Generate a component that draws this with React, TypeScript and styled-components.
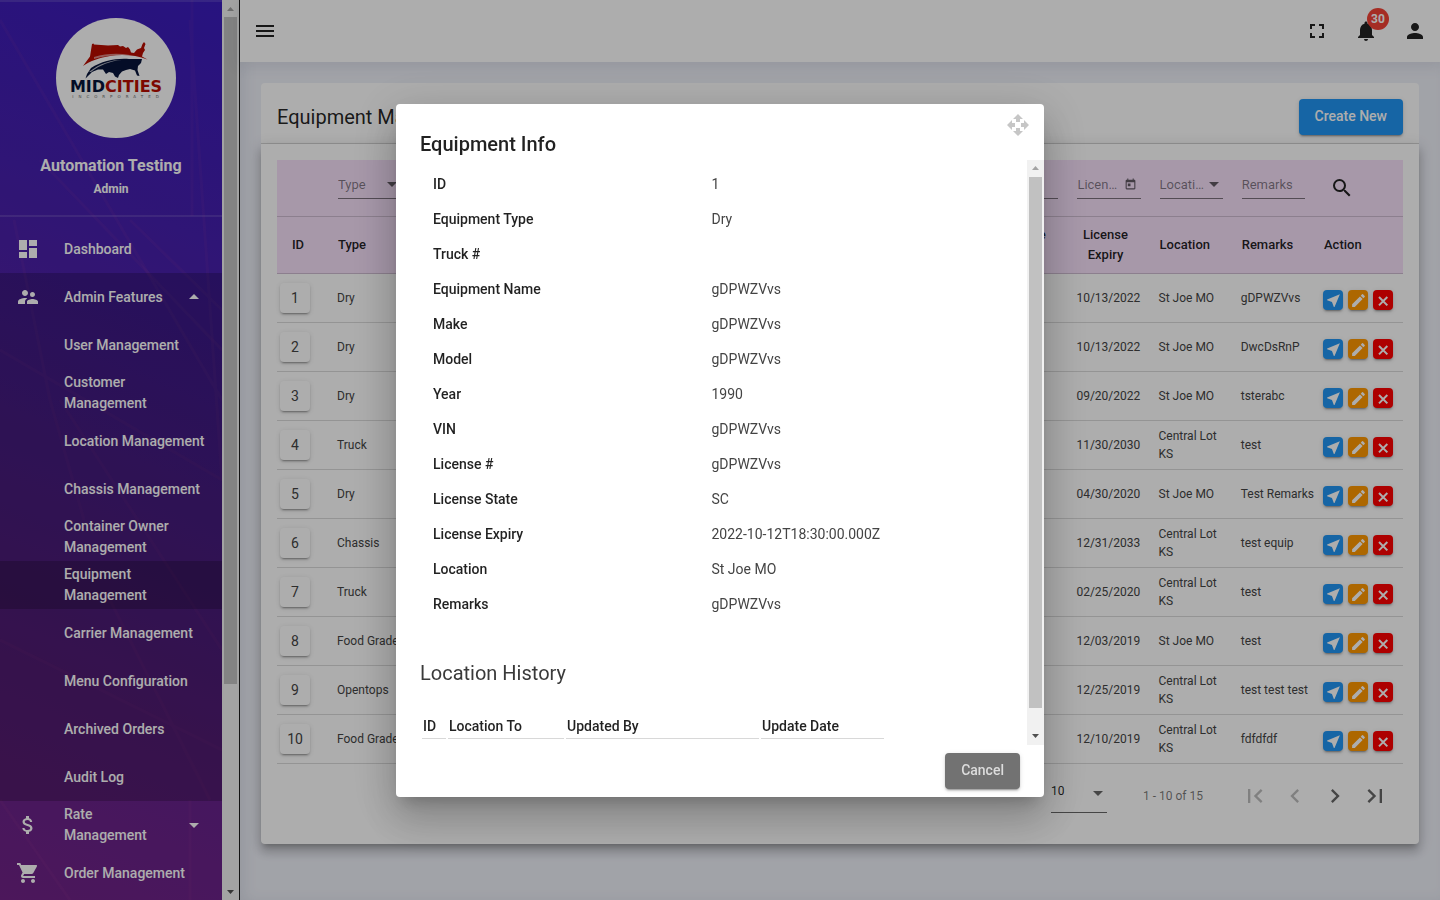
import React from 'react';
import styled, { createGlobalStyle, css } from 'styled-components';
import {
  MdArrowDropDown,
  MdArrowDropUp,
  MdAttachMoney,
  MdChevronLeft,
  MdChevronRight,
  MdDashboard,
  MdEdit,
  MdFirstPage,
  MdFullscreen,
  MdLastPage,
  MdMenu,
  MdNearMe,
  MdNotifications,
  MdOpenWith,
  MdPerson,
  MdSearch,
  MdShoppingCart,
  MdSupervisorAccount,
  MdToday,
} from 'react-icons/md';

const GlobalStyle = createGlobalStyle`
  *, *::before, *::after { box-sizing: border-box; }
  html, body, #root { height: 100%; }
  body {
    margin: 0;
    overflow: hidden;
    background: #eef0f8;
    color: rgba(0, 0, 0, 0.87);
    font-family: Roboto, "Liberation Sans", sans-serif;
    font-size: 14px;
  }
  button, input, select { font-family: inherit; color: inherit; }
  button { cursor: pointer; }
`;

const bareButton = css`
  display: flex;
  align-items: center;
  justify-content: center;
  padding: 0;
  border: 0;
  background: none;
`;

const raised = css`
  box-shadow: 0 3px 1px -2px rgba(0, 0, 0, 0.2), 0 2px 2px 0 rgba(0, 0, 0, 0.14),
    0 1px 5px 0 rgba(0, 0, 0, 0.12);
`;

const Shell = styled.div`
  display: flex;
  height: 100vh;
`;

/* ---------- sidebar ---------- */

const Sidebar = styled.aside`
  display: flex;
  flex: 0 0 240px;
  overflow: hidden;
  border-right: 1px solid #1c1c1c;
`;

const SidebarBody = styled.div`
  position: relative;
  flex: 1;
  overflow: hidden;
  color: #fff;
  background: linear-gradient(22deg, #702286 0%, #64228e 25%, #55229e 50%, #461fae 75%, #3a1cbc 100%);
`;

const Streaks = styled.svg`
  position: absolute;
  inset: 0;
  width: 100%;
  height: 100%;
`;

const SidebarContent = styled.div`
  position: relative;
`;

const Profile = styled.div`
  display: flex;
  flex-direction: column;
  align-items: center;
  height: 217px;
  padding-top: 16px;
  border-top: 2px solid rgba(255, 255, 255, 0.12);
  border-bottom: 2px solid rgba(255, 255, 255, 0.12);
`;

const Avatar = styled.div`
  flex: none;
  width: 120px;
  height: 120px;
  margin-left: 10px;
  border-radius: 50%;
  overflow: hidden;
  background: #fff;
`;

const UserName = styled.div`
  margin-top: 16px;
  font-size: 16px;
  font-weight: 700;
  line-height: 24px;
`;

const UserRole = styled.div`
  font-size: 12px;
  font-weight: 700;
  line-height: 22px;
`;

const Menu = styled.ul<{ $top?: boolean }>`
  margin: 0;
  padding: ${(p) => (p.$top ? '8px' : '0')} 0 0;
  list-style: none;
`;

const MenuGroup = styled.li<{ $open?: boolean }>`
  background: ${(p) => (p.$open ? 'rgba(0, 0, 0, 0.2)' : 'none')};
`;

const MenuLink = styled.a<{ $active?: boolean }>`
  display: grid;
  grid-template-columns: 48px 1fr auto;
  align-items: center;
  height: 48px;
  padding-left: 16px;
  color: #fff;
  background: ${(p) => (p.$active ? 'rgba(0, 0, 0, 0.2)' : 'none')};
  font-size: 14px;
  font-weight: 500;
  line-height: 21px;
  text-decoration: none;
`;

const SubLink = styled(MenuLink)`
  display: flex;
  padding: 0 16px 0 64px;
`;

const Caret = styled.span`
  display: flex;
  padding: 0 16px;
`;

/* ---------- scroll bar ---------- */

const Track = styled.div`
  display: flex;
  flex: 0 0 17px;
  flex-direction: column;
  align-items: center;
  background: #f1f1f1;
`;

const ThumbLane = styled.div`
  display: flex;
  flex: 1;
  flex-direction: column;
`;

const Thumb = styled.div<{ $share: number }>`
  flex: 0 0 ${(p) => p.$share * 100}%;
  width: 13px;
  background: #c1c1c1;
`;

const ArrowCell = styled.div`
  display: flex;
  align-items: center;
  justify-content: center;
  flex: 0 0 17px;
`;

function ScrollBar({ share }: { share: number }) {
  return (
    <Track aria-hidden="true">
      <ArrowCell>
        <svg width="7" height="4" viewBox="0 0 7 4">
          <path d="M0 4L3.500 0 7 4z" fill="#a3a3a3" />
        </svg>
      </ArrowCell>
      <ThumbLane>
        <Thumb $share={share} />
      </ThumbLane>
      <ArrowCell>
        <svg width="7" height="4" viewBox="0 0 7 4">
          <path d="M0 0L3.500 4 7 0z" fill="#505050" />
        </svg>
      </ArrowCell>
    </Track>
  );
}

/* ---------- top bar ---------- */

const Main = styled.main`
  display: flex;
  flex: 1;
  flex-direction: column;
  min-width: 0;
  box-shadow: inset 6px 0 16px -4px rgba(60, 70, 110, 0.12);
`;

const TopBar = styled.header`
  display: flex;
  flex: 0 0 62px;
  align-items: center;
  justify-content: space-between;
  padding: 0 13px;
  background: #fff;
  box-shadow: 0 2px 14px 2px rgba(50, 60, 90, 0.1);
`;

const TopActions = styled.div`
  display: flex;
  gap: 25px;
`;

const IconButton = styled.button<{ $size?: number; $soft?: boolean }>`
  ${bareButton}
  position: relative;
  width: ${(p) => p.$size ?? 24}px;
  height: ${(p) => p.$size ?? 24}px;
  color: ${(p) => (p.$soft ? 'rgba(0, 0, 0, 0.6)' : '#222')};

  &:disabled {
    color: rgba(0, 0, 0, 0.26);
  }
`;

const Badge = styled.span`
  position: absolute;
  top: -11px;
  left: 13px;
  width: 22px;
  height: 22px;
  border-radius: 50%;
  color: #fff;
  background: #f44336;
  font-size: 12px;
  font-weight: 700;
  line-height: 22px;
  text-align: center;
`;

/* ---------- card ---------- */

const Card = styled.section`
  margin: 21px 21px 0;
  border-radius: 4px;
  background: #fff;
`;

const CardHeader = styled.div`
  display: flex;
  align-items: center;
  justify-content: space-between;
  height: 61px;
  padding: 8px 16px 0;
  border-bottom: 1px solid #d8d8d8;
`;

const CardTitle = styled.h1`
  margin: 0;
  font-size: 20px;
  font-weight: 400;
  line-height: 32px;
`;

const RaisedButton = styled.button<{ $tone: 'blue' | 'grey' }>`
  ${raised}
  height: 36px;
  padding: 0 16px 2px;
  border: 0;
  border-radius: 4px;
  color: ${(p) => (p.$tone === 'blue' ? '#fff' : '#dcdcdc')};
  background: ${(p) => (p.$tone === 'blue' ? '#2196f3' : '#727272')};
  font-size: 14px;
  font-weight: 500;
`;

const CardBody = styled.div`
  padding: 16px;
  border-radius: 0 0 4px 4px;
  box-shadow: 0 5px 5px -3px rgba(0, 0, 0, 0.2), 0 8px 10px 1px rgba(0, 0, 0, 0.14),
    0 3px 14px 2px rgba(0, 0, 0, 0.12);
`;

const DataTable = styled.table`
  width: 100%;
  border-collapse: separate;
  border-spacing: 0;
  table-layout: fixed;
`;

const SizedCol = styled.col<{ $width: number }>`
  width: ${(p) => p.$width}px;
`;

const HeadCell = styled.th<{ $center?: boolean }>`
  height: 57px;
  padding: 0 24px 0 2px;
  border-bottom: 1px solid rgba(0, 0, 0, 0.16);
  background: #f6e0fa;
  font-size: 13px;
  font-weight: 500;
  line-height: 20px;
  text-align: ${(p) => (p.$center ? 'center' : 'left')};
`;

const IdHeadCell = styled(HeadCell)`
  padding: 0 17px 0 0;
  text-align: center;
`;

const FilterCell = styled(HeadCell)`
  padding: 0 17px 7px 2px;
`;

const Cell = styled.td`
  height: 49px;
  padding: 0 6px 0 1px;
  border-bottom: 1px solid rgba(0, 0, 0, 0.14);
  color: #444;
  font-size: 12px;
  line-height: 18px;
`;

const IdCell = styled(Cell)`
  padding: 0 0 0 3px;
`;

const ActionCell = styled(Cell)`
  padding: 4px 0 0 1px;
`;

const IdButton = styled.button`
  ${bareButton}
  ${raised}
  width: 30px;
  height: 30px;
  border-radius: 4px;
  background: #fff;
  font-size: 14px;
`;

const FieldBox = styled.div`
  display: flex;
  align-items: center;
  height: 28px;
  border-bottom: 1px solid rgba(0, 0, 0, 0.5);
  color: rgba(0, 0, 0, 0.54);
`;

const FieldInput = styled.input`
  flex: 1;
  min-width: 0;
  padding: 0;
  border: 0;
  outline: 0;
  background: none;
  font-size: 13px;
  text-overflow: ellipsis;

  &::placeholder {
    color: rgba(0, 0, 0, 0.48);
  }
`;

const FieldSelect = styled.select`
  flex: 1;
  min-width: 0;
  padding: 0;
  border: 0;
  outline: 0;
  appearance: none;
  background: none;
  color: rgba(0, 0, 0, 0.48);
  font-size: 13px;
  overflow: hidden;
  text-overflow: ellipsis;
`;

const Triangle = styled.span`
  flex: none;
  margin: 0 4px;
  border: 5px solid transparent;
  border-top-color: rgba(0, 0, 0, 0.6);
  border-bottom: 0;
`;

const CalendarButton = styled.button`
  ${bareButton}
  width: 20px;
  color: rgba(0, 0, 0, 0.6);
`;

const RowActions = styled.div`
  display: flex;
  gap: 5px;
`;

const ActionButton = styled.button<{ $color: string }>`
  ${bareButton}
  ${raised}
  flex: none;
  width: 20px;
  height: 20px;
  padding-top: 1px;
  border-radius: 4px;
  color: #fff;
  background: ${(p) => p.$color};
`;

const Paginator = styled.div`
  display: flex;
  align-items: center;
  justify-content: flex-end;
  height: 64px;
  padding-right: 8px;
  color: rgba(0, 0, 0, 0.54);
  font-size: 12px;
`;

const PageSize = styled.div`
  display: flex;
  align-items: center;
  width: 56px;
  height: 40px;
  margin: 0 36px 6px 0;
  padding-top: 2px;
  border-bottom: 1px solid rgba(0, 0, 0, 0.6);
`;

const PageSizeSelect = styled(FieldSelect)`
  height: 24px;
  padding-bottom: 6px;
  color: rgba(0, 0, 0, 0.87);
  font-size: 12px;
`;

const Range = styled.span`
  margin-right: 32px;
`;

/* ---------- dialog ---------- */

const Backdrop = styled.div`
  position: fixed;
  inset: 0;
  display: flex;
  align-items: center;
  justify-content: center;
  background: rgba(0, 0, 0, 0.32);
`;

const Dialog = styled.div`
  position: relative;
  display: flex;
  flex-direction: column;
  width: 45%;
  padding-top: 24px;
  border-radius: 4px;
  background: #fff;
  box-shadow: 0 11px 15px -7px rgba(0, 0, 0, 0.2), 0 24px 38px 3px rgba(0, 0, 0, 0.14),
    0 9px 46px 8px rgba(0, 0, 0, 0.12);
`;

const DragHandle = styled.span`
  position: absolute;
  top: 9px;
  right: 14px;
  display: flex;
  color: #c6c6c6;
`;

const DialogTitle = styled.h2`
  margin: 0;
  padding: 0 24px;
  font-size: 20px;
  font-weight: 500;
  line-height: 32px;
`;

const DialogScroll = styled.div`
  display: flex;
  height: 65vh;
`;

const DialogContent = styled.div`
  flex: 1;
  min-width: 0;
  padding: 7px 24px 0;
  overflow: hidden;
`;

const InfoBlock = styled.div`
  margin-right: 24px;
`;

const InfoTable = styled.table`
  width: 100%;
  border-collapse: collapse;
  table-layout: fixed;
`;

const InfoLabel = styled.th`
  width: 50%;
  height: 35px;
  padding: 0 0 0 13px;
  font-size: 14px;
  font-weight: 500;
  text-align: left;
`;

const InfoValue = styled.td`
  padding: 0 0 0 12px;
  color: #444;
  font-size: 14px;
`;

const SectionTitle = styled.h3`
  margin: 35px 0 0;
  color: #3a3a3a;
  font-size: 20px;
  font-weight: 400;
  line-height: 32px;
`;

const HistoryTable = styled.table`
  width: 466px;
  margin-top: 23px;
  border-spacing: 2px;
  table-layout: fixed;
`;

const HistoryHead = styled.th<{ $width: number }>`
  width: ${(p) => p.$width}px;
  height: 25px;
  padding: 1px;
  border-bottom: 1px solid #d8d8d8;
  font-size: 14px;
  font-weight: 500;
  text-align: left;
`;

const DialogActions = styled.div`
  display: flex;
  justify-content: flex-end;
  padding: 8px 24px;
`;

/* ---------- data ---------- */

const subItems = [
  'User Management',
  'Customer Management',
  'Location Management',
  'Chassis Management',
  'Container Owner Management',
  'Equipment Management',
  'Carrier Management',
  'Menu Configuration',
  'Archived Orders',
  'Audit Log',
];

type Kind = 'select' | 'text' | 'date';
const columns: { label: string; kind: Kind }[] = [
  { label: 'Type', kind: 'select' },
  { label: 'Truck #', kind: 'text' },
  { label: 'Name', kind: 'text' },
  { label: 'Make', kind: 'text' },
  { label: 'Model', kind: 'text' },
  { label: 'Year', kind: 'text' },
  { label: 'VIN', kind: 'text' },
  { label: 'License #', kind: 'text' },
  { label: 'License State', kind: 'text' },
  { label: 'License Expiry', kind: 'date' },
  { label: 'Location', kind: 'select' },
  { label: 'Remarks', kind: 'text' },
];

/* Long labels are cut short in the filter row, so this one uses its short form. */
const filterLabels: Record<string, string> = { 'License State': 'State' };

const rows = [
  { type: 'Dry', expiry: '10/13/2022', location: 'St Joe MO', remarks: 'gDPWZVvs' },
  { type: 'Dry', expiry: '10/13/2022', location: 'St Joe MO', remarks: 'DwcDsRnP' },
  { type: 'Dry', expiry: '09/20/2022', location: 'St Joe MO', remarks: 'tsterabc' },
  { type: 'Truck', expiry: '11/30/2030', location: 'Central Lot KS', remarks: 'test' },
  { type: 'Dry', expiry: '04/30/2020', location: 'St Joe MO', remarks: 'Test Remarks' },
  { type: 'Chassis', expiry: '12/31/2033', location: 'Central Lot KS', remarks: 'test equip' },
  { type: 'Truck', expiry: '02/25/2020', location: 'Central Lot KS', remarks: 'test' },
  { type: 'Food Grade', expiry: '12/03/2019', location: 'St Joe MO', remarks: 'test' },
  { type: 'Opentops', expiry: '12/25/2019', location: 'Central Lot KS', remarks: 'test test test' },
  { type: 'Food Grade', expiry: '12/10/2019', location: 'Central Lot KS', remarks: 'fdfdfdf' },
];

const info = [
  ['ID', '1'],
  ['Equipment Type', 'Dry'],
  ['Truck #', ''],
  ['Equipment Name', 'gDPWZVvs'],
  ['Make', 'gDPWZVvs'],
  ['Model', 'gDPWZVvs'],
  ['Year', '1990'],
  ['VIN', 'gDPWZVvs'],
  ['License #', 'gDPWZVvs'],
  ['License State', 'SC'],
  ['License Expiry', '2022-10-12T18:30:00.000Z'],
  ['Location', 'St Joe MO'],
  ['Remarks', 'gDPWZVvs'],
];

/* ---------- parts ---------- */

function Logo() {
  return (
    <svg width="120" height="120" viewBox="0 0 120 120" role="img" aria-label="Midcities Incorporated">
      <path
        d="M27 48L34 38.500 36 26 37.500 25.500 38 26.500 52 27.500 62 27 64 28.500 67 28 70 30 72 29 74 31.500 75 34.500 78 35 81 31.500 85 30 86.500 26 88 24 89.500 26 88 30 89 32 87 35 86 38.500 91.500 41.500 C80 37 66 36 54 38 C44 39.500 34 43 27 48z"
        fill="#b80c00"
      />
      <path d="M38 39 C50 35.500 62 35 74 37 C60 36.500 48 37.500 38 41z" fill="#fff" opacity="0.5" />
      <path
        d="M29.500 60.500 L31 56 35 50 C46 43 60 40 73 41 L86 41 85 45 82 48 81.500 52 83.500 58 81 57.500 79 52.500 74 51 70 52 66 53.500 63 57 62 60 59 58.500 57 55 53 54 50 56 47 51.500 42 51.500 36 54z"
        fill="#07143a"
      />
      <path d="M33 54 C44 45 56 42 66 42 C54 43 44 47 35 54z" fill="#fff" opacity="0.7" />
      <text x="60" y="74" fontFamily="DejaVu Sans, sans-serif" fontSize="16" fontWeight="700" textAnchor="middle">
        <tspan fill="#07143a">MID</tspan>
        <tspan fill="#b80c00">CITIES</tspan>
      </text>
      <text x="62" y="80" fill="#666" fontFamily="DejaVu Sans, sans-serif" fontSize="4" letterSpacing="5" textAnchor="middle">
        INCORPORATED
      </text>
    </svg>
  );
}

function CrossIcon() {
  return (
    <svg width="16" height="16" viewBox="0 0 24 24" fill="none" stroke="currentColor" strokeWidth="3" aria-hidden="true">
      <path d="M6 6L18.500 18.500M18.500 6L6 18.500" />
    </svg>
  );
}

function Filter({ label, kind }: { label: string; kind: Kind }) {
  if (kind === 'select') {
    return (
      <FieldBox>
        <FieldSelect aria-label={label} defaultValue="">
          <option value="">{label}</option>
        </FieldSelect>
        <Triangle />
      </FieldBox>
    );
  }
  return (
    <FieldBox>
      <FieldInput aria-label={label} placeholder={label} />
      {kind === 'date' && (
        <CalendarButton aria-label="Open calendar">
          <MdToday size={13} />
        </CalendarButton>
      )}
    </FieldBox>
  );
}

export default function App() {
  return (
    <>
      <GlobalStyle />
      <Shell>
        <Sidebar>
          <SidebarBody>
            <Streaks viewBox="0 0 222 900" preserveAspectRatio="none" aria-hidden="true">
              <g stroke="#c05a9a" strokeOpacity="0.07" strokeWidth="3" fill="none">
                <path d="M0 20L222 400M14 220L50 400 84 520M190 20L222 480M0 350L222 480M130 220L222 310M192 0V216" />
                <path d="M60 400L222 650M0 640L222 750M110 600L210 800M0 800L70 900M190 800V900M40 160L222 350" />
              </g>
            </Streaks>
            <SidebarContent>
              <Profile>
                <Avatar>
                  <Logo />
                </Avatar>
                <UserName>Automation Testing</UserName>
                <UserRole>Admin</UserRole>
              </Profile>
              <nav>
                <Menu $top>
                  <MenuGroup>
                    <MenuLink href="#dashboard">
                      <MdDashboard size={24} />
                      <span>Dashboard</span>
                    </MenuLink>
                  </MenuGroup>
                  <MenuGroup $open>
                    <MenuLink href="#admin">
                      <MdSupervisorAccount size={24} />
                      <span>Admin Features</span>
                      <Caret>
                        <MdArrowDropUp size={24} />
                      </Caret>
                    </MenuLink>
                    <Menu>
                      {subItems.map((item) => (
                        <li key={item}>
                          <SubLink href="#admin" $active={item === 'Equipment Management'}>
                            {item}
                          </SubLink>
                        </li>
                      ))}
                    </Menu>
                  </MenuGroup>
                  <MenuGroup>
                    <MenuLink href="#rate">
                      <MdAttachMoney size={24} />
                      <span>Rate Management</span>
                      <Caret>
                        <MdArrowDropDown size={24} />
                      </Caret>
                    </MenuLink>
                  </MenuGroup>
                  <MenuGroup>
                    <MenuLink href="#orders">
                      <MdShoppingCart size={24} />
                      <span>Order Management</span>
                    </MenuLink>
                  </MenuGroup>
                </Menu>
              </nav>
            </SidebarContent>
          </SidebarBody>
          <ScrollBar share={0.77} />
        </Sidebar>

        <Main>
          <TopBar>
            <IconButton aria-label="Toggle menu">
              <MdMenu size={24} />
            </IconButton>
            <TopActions>
              <IconButton aria-label="Full screen">
                <MdFullscreen size={24} />
              </IconButton>
              <IconButton aria-label="Notifications">
                <MdNotifications size={24} />
                <Badge>30</Badge>
              </IconButton>
              <IconButton aria-label="Account">
                <MdPerson size={24} />
              </IconButton>
            </TopActions>
          </TopBar>

          <Card>
            <CardHeader>
              <CardTitle>Equipment Management</CardTitle>
              <RaisedButton $tone="blue">Create New</RaisedButton>
            </CardHeader>
            <CardBody>
              <DataTable>
                <colgroup>
                  <SizedCol $width={59} />
                  {columns.map((c) => (
                    <col key={c.label} />
                  ))}
                  <SizedCol $width={81} />
                </colgroup>
                <thead>
                  <tr>
                    <IdHeadCell />
                    {columns.map((c) => (
                      <FilterCell key={c.label}>
                        <Filter label={filterLabels[c.label] ?? c.label} kind={c.kind} />
                      </FilterCell>
                    ))}
                    <HeadCell>
                      <IconButton aria-label="Search" $size={36}>
                        <MdSearch size={24} />
                      </IconButton>
                    </HeadCell>
                  </tr>
                  <tr>
                    <IdHeadCell>ID</IdHeadCell>
                    {columns.map((c) => (
                      <HeadCell key={c.label} $center={c.label.length > 9}>
                        {c.label}
                      </HeadCell>
                    ))}
                    <HeadCell>Action</HeadCell>
                  </tr>
                </thead>
                <tbody>
                  {rows.map((r, i) => (
                    <tr key={i}>
                      <IdCell>
                        <IdButton>{i + 1}</IdButton>
                      </IdCell>
                      <Cell>{r.type}</Cell>
                      <Cell colSpan={8} />
                      <Cell>{r.expiry}</Cell>
                      <Cell>{r.location}</Cell>
                      <Cell>{r.remarks}</Cell>
                      <ActionCell>
                        <RowActions>
                          <ActionButton $color="#2196f3" aria-label="Send">
                            <MdNearMe size={17} />
                          </ActionButton>
                          <ActionButton $color="#ff9800" aria-label="Edit">
                            <MdEdit size={17} />
                          </ActionButton>
                          <ActionButton $color="#ff0000" aria-label="Delete">
                            <CrossIcon />
                          </ActionButton>
                        </RowActions>
                      </ActionCell>
                    </tr>
                  ))}
                </tbody>
              </DataTable>
              <Paginator>
                <PageSize>
                  <PageSizeSelect aria-label="Items per page" defaultValue="10">
                    <option value="10">10</option>
                    <option value="25">25</option>
                  </PageSizeSelect>
                  <Triangle />
                </PageSize>
                <Range>1 - 10 of 15</Range>
                <IconButton aria-label="First page" $size={40} $soft disabled>
                  <MdFirstPage size={28} />
                </IconButton>
                <IconButton aria-label="Previous page" $size={40} $soft disabled>
                  <MdChevronLeft size={28} />
                </IconButton>
                <IconButton aria-label="Next page" $size={40} $soft>
                  <MdChevronRight size={28} />
                </IconButton>
                <IconButton aria-label="Last page" $size={40} $soft>
                  <MdLastPage size={28} />
                </IconButton>
              </Paginator>
            </CardBody>
          </Card>
        </Main>
      </Shell>

      <Backdrop>
        <Dialog role="dialog" aria-modal="true" aria-labelledby="equipment-info">
          <DragHandle>
            <MdOpenWith size={24} />
          </DragHandle>
          <DialogTitle id="equipment-info">Equipment Info</DialogTitle>
          <DialogScroll>
            <DialogContent>
              <InfoBlock>
                <InfoTable>
                  <tbody>
                    {info.map(([label, value]) => (
                      <tr key={label}>
                        <InfoLabel scope="row">{label}</InfoLabel>
                        <InfoValue>{value}</InfoValue>
                      </tr>
                    ))}
                  </tbody>
                </InfoTable>
              </InfoBlock>
              <SectionTitle>Location History</SectionTitle>
              <HistoryTable>
                <thead>
                  <tr>
                    <HistoryHead $width={24}>ID</HistoryHead>
                    <HistoryHead $width={116}>Location To</HistoryHead>
                    <HistoryHead $width={193}>Updated By</HistoryHead>
                    <HistoryHead $width={123}>Update Date</HistoryHead>
                  </tr>
                </thead>
              </HistoryTable>
            </DialogContent>
            <ScrollBar share={0.964} />
          </DialogScroll>
          <DialogActions>
            <RaisedButton $tone="grey">Cancel</RaisedButton>
          </DialogActions>
        </Dialog>
      </Backdrop>
    </>
  );
}
